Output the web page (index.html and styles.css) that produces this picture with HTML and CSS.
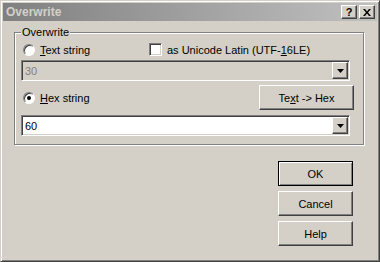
FILE: index.html
```html
<!DOCTYPE html>
<html lang="en">
<head>
  <meta charset="UTF-8">
  <title>Overwrite</title>
  <link rel="stylesheet" href="styles.css">
</head>
<body>
  <div class="window">
    <div class="titlebar">
      <span class="title">Overwrite</span>
      <div class="caption-buttons">
        <span class="cap-btn cap-help">?</span>
        <span class="cap-btn cap-close">
          <svg width="8" height="7" viewBox="0 0 8 7"><path d="M0 0h2l2 2.5L6 0h2L5 3.5 8 7H6L4 4.5 2 7H0l3-3.5z" fill="#000"/></svg>
        </span>
      </div>
    </div>

    <div class="client">
      <fieldset class="group">
        <legend>Overwrite</legend>

        <div class="row row-text">
          <label class="option option-wide"><span class="radio"></span><span><u>T</u>ext string</span></label>
          <label class="option"><span class="checkbox"></span><span>as Unicode Latin (UTF-<u>1</u>6LE)</span></label>
        </div>

        <div class="combo combo-disabled">
          <span class="combo-text">30</span>
          <span class="drop-btn"><svg width="7" height="4" viewBox="0 0 7 4"><path d="M0 0h7L3.5 4z" fill="#000"/></svg></span>
        </div>

        <div class="row row-hex">
          <label class="option"><span class="radio radio-checked"></span><span><u>H</u>ex string</span></label>
          <span class="btn btn-convert"><span>Te<u>x</u>t -&gt; Hex</span></span>
        </div>

        <div class="combo">
          <span class="combo-text">60</span>
          <span class="drop-btn"><svg width="7" height="4" viewBox="0 0 7 4"><path d="M0 0h7L3.5 4z" fill="#000"/></svg></span>
        </div>
      </fieldset>

      <div class="actions">
        <span class="btn btn-default">OK</span>
        <span class="btn">Cancel</span>
        <span class="btn">Help</span>
      </div>
    </div>
  </div>
</body>
</html>
```

FILE: styles.css
```css
body {
  margin: 0;
  font-family: "Liberation Sans", Arial, sans-serif;
  font-size: 11px;
  color: #000;
  background: #d4d0c8;
}
.window {
  width: 380px;
  height: 262px;
  box-sizing: border-box;
  background: #d4d0c8;
  border: 1px solid;
  border-color: #d4d0c8 #404040 #404040 #d4d0c8;
  padding: 2px;
  box-shadow: inset 1px 1px 0 #fff, inset -1px -1px 0 #808080;
  display: flex;
  flex-direction: column;
}
.titlebar {
  height: 18px;
  background: linear-gradient(to right, #808080, #c0c0c0);
  display: flex;
  align-items: center;
  justify-content: space-between;
  padding: 0 2px 0 3px;
}
.title {
  color: #d4d0c8;
  font-weight: bold;
  font-size: 12px;
}
.caption-buttons {
  display: flex;
  gap: 2px;
}
.cap-btn {
  width: 16px;
  height: 14px;
  box-sizing: border-box;
  background: #d4d0c8;
  border: 1px solid;
  border-color: #fff #404040 #404040 #fff;
  box-shadow: inset -1px -1px 0 #808080;
  display: flex;
  align-items: center;
  justify-content: center;
}
.cap-help {
  font-weight: bold;
  font-size: 11px;
  line-height: 1;
}
.client {
  flex: 1;
  display: flex;
  flex-direction: column;
  padding: 5px 0 0 11px;
}
.group {
  width: 350px;
  box-sizing: border-box;
  margin: 0;
  min-inline-size: 0;
  padding: 4px 6px 8px 6px;
  border: 1px solid #808080;
  box-shadow: inset 1px 1px 0 #fff, 1px 1px 0 #fff;
}
.group legend {
  padding: 0 1px;
  margin-left: 0;
  line-height: 13px;
  background: #d4d0c8;
}
.row {
  display: flex;
  align-items: center;
}
.row-text {
  height: 13px;
}
.row-hex {
  height: 25px;
  margin-top: 4px;
  justify-content: space-between;
}
.option {
  display: flex;
  align-items: center;
  gap: 5px;
  margin-left: 2px;
}
.option-wide {
  width: 124px;
}
.radio {
  width: 12px;
  height: 12px;
  box-sizing: border-box;
  border-radius: 50%;
  background: #fff;
  border: 1px solid;
  border-color: #808080 #fff #fff #808080;
  box-shadow: inset 1px 1px 0 #404040;
  display: flex;
  align-items: center;
  justify-content: center;
}
.radio-checked::after {
  content: "";
  width: 4px;
  height: 4px;
  border-radius: 50%;
  background: #000;
}
.checkbox {
  width: 13px;
  height: 13px;
  box-sizing: border-box;
  background: #fff;
  border: 1px solid;
  border-color: #808080 #fff #fff #808080;
  box-shadow: inset 1px 1px 0 #404040, inset -1px -1px 0 #d4d0c8;
}
.combo {
  width: 329px;
  height: 21px;
  box-sizing: border-box;
  margin-top: 4px;
  background: #fff;
  border: 1px solid;
  border-color: #808080 #fff #fff #808080;
  padding: 1px;
  box-shadow: inset 1px 1px 0 #404040, inset -1px -1px 0 #d4d0c8;
  display: flex;
  align-items: stretch;
}
.row-hex + .combo {
  margin-top: 5px;
}
.combo-disabled {
  background: #d4d0c8;
  color: #808080;
}
.combo-text {
  flex: 1;
  display: flex;
  align-items: center;
  padding-left: 2px;
}
.drop-btn {
  width: 16px;
  box-sizing: border-box;
  background: #d4d0c8;
  border: 1px solid;
  border-color: #fff #404040 #404040 #fff;
  box-shadow: inset -1px -1px 0 #808080;
  display: flex;
  align-items: center;
  justify-content: center;
}
.btn {
  height: 25px;
  box-sizing: border-box;
  background: #d4d0c8;
  border: 1px solid;
  border-color: #fff #404040 #404040 #fff;
  box-shadow: inset -1px -1px 0 #808080;
  display: flex;
  align-items: center;
  justify-content: center;
}
.btn-convert {
  width: 95px;
  margin-right: 3px;
}
.actions {
  align-self: flex-end;
  margin: 16px 24px 0 0;
  display: flex;
  flex-direction: column;
  gap: 5px;
}
.actions .btn {
  width: 75px;
}
.btn-default {
  border-color: #000;
  box-shadow: inset 1px 1px 0 #fff, inset -1px -1px 0 #808080;
}
```
